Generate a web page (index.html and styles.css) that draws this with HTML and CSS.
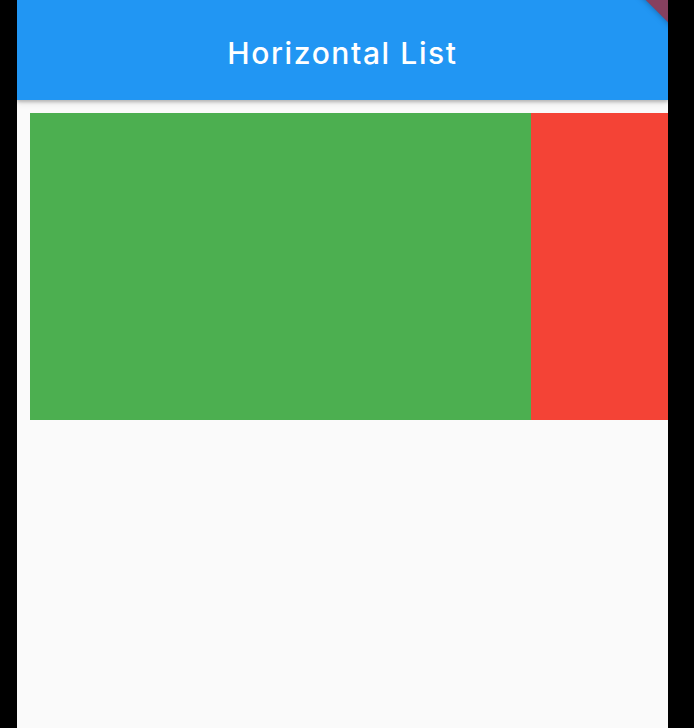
FILE: index.html
```html
<!doctype html>
<html lang="en">

<head>
  <meta charset="UTF-8" />
  <meta name="viewport" content="width=device-width, initial-scale=1.0" />
  <title>Horizontal List</title>
  <link rel="stylesheet" href="styles.css">
</head>

<body>
  <div class="screen">
    <header class="app-bar">
      <h1 class="title">Horizontal List</h1>
    </header>

    <main class="content">
      <div class="horizontal-list">
        <div class="list-item green"></div>
        <div class="list-item red"></div>
        <div class="list-item blue"></div>
      </div>
    </main>

    <div class="debug-banner"></div>
  </div>
</body>

</html>
```

FILE: styles.css
```css
* {
  margin: 0;
  padding: 0;
  box-sizing: border-box;
}

html,
body {
  height: 100%;
  width: 100%;
}

body {
  background-color: #000;
  font-family: Inter, Roboto, sans-serif;
  overflow: hidden;
}

.screen {
  position: relative;
  width: 651px;
  height: 728px;
  margin-left: 17px;
  background-color: #fafafa;
  overflow: hidden;
}

.app-bar {
  position: relative;
  z-index: 1;
  height: 100px;
  padding-top: 5px;
  display: flex;
  align-items: center;
  justify-content: center;
  background-color: #2196f3;
  box-shadow: 0 2px 3px rgba(0, 0, 0, 0.22), 0 4px 6px rgba(0, 0, 0, 0.08);
}

.title {
  font-size: 30px;
  font-weight: 500;
  color: #fff;
  letter-spacing: 1.6px;
}

.content {
  padding: 13px;
}

.horizontal-list {
  display: flex;
  height: 307px;
  overflow: hidden;
  margin-right: -13px;
}

.list-item {
  flex-shrink: 0;
  width: 501px;
  height: 100%;
}

.green {
  background-color: #4caf50;
}

.red {
  background-color: #f44336;
}

.blue {
  background-color: #2196f3;
}

.debug-banner {
  position: absolute;
  z-index: 2;
  left: 594px;
  top: -23px;
  width: 120px;
  height: 40px;
  transform: rotate(45deg);
  background-color: #86405f;
  box-shadow: 0 0 6px rgba(0, 0, 0, 0.35);
}
```
